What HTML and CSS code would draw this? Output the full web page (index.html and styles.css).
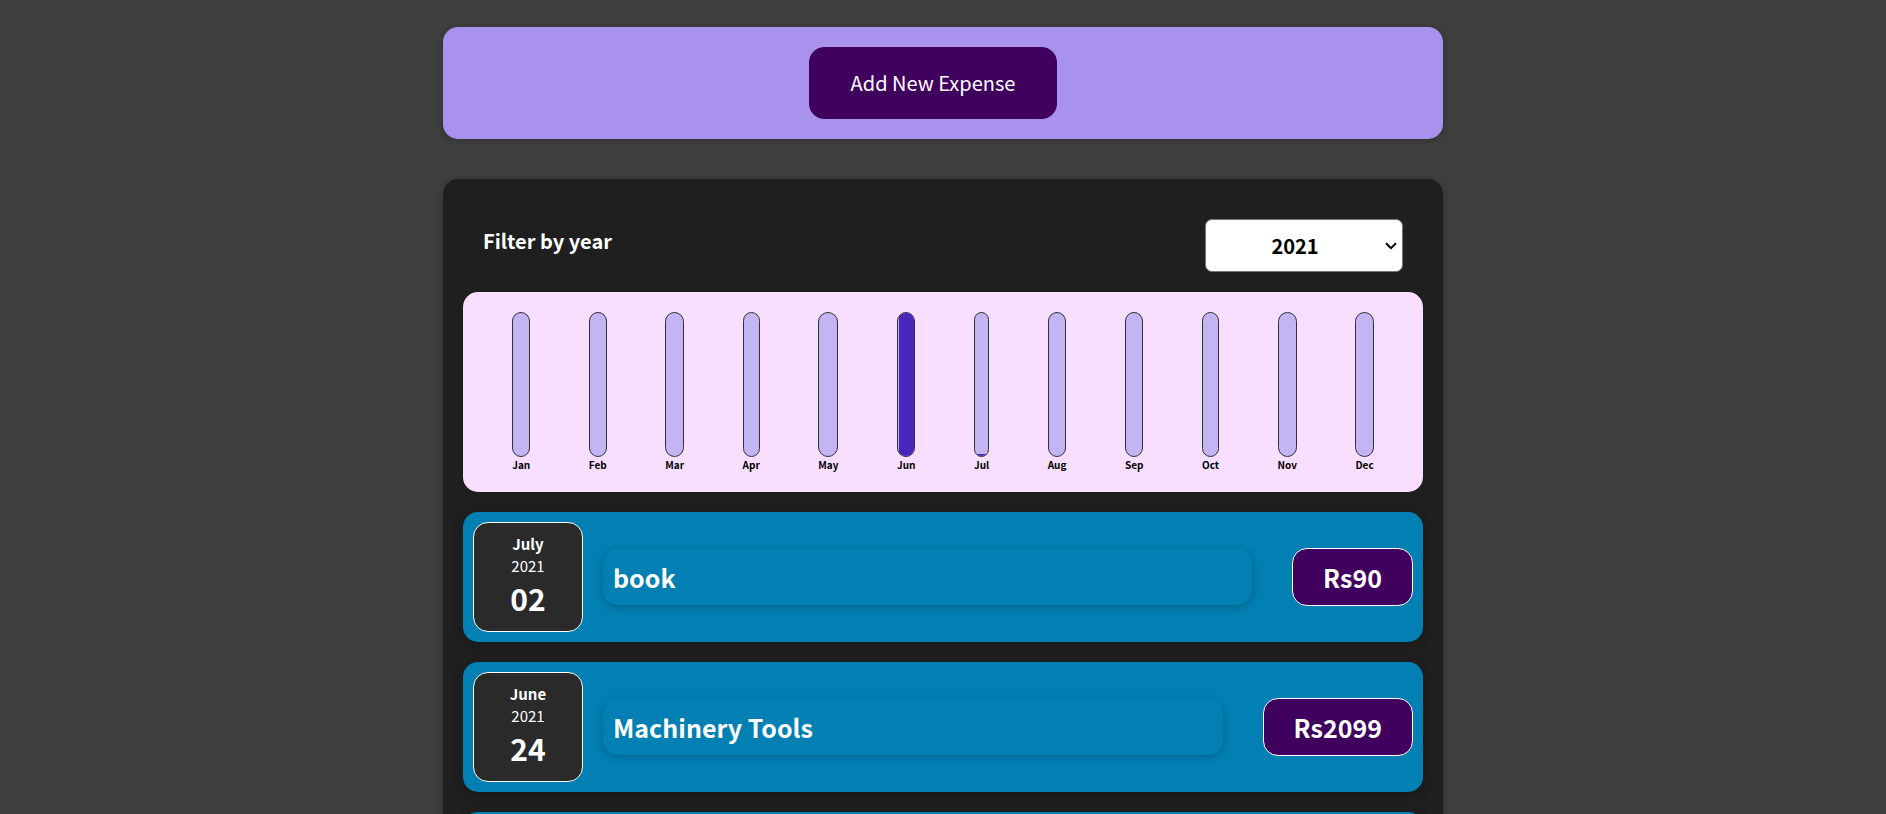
FILE: index.html
```
<!DOCTYPE html>
<html lang="en">
<head>
<meta charset="utf-8">
<title>Expenses</title>
<link rel="stylesheet" href="styles.css">
</head>
<body>
<main class="page">
  <section class="new-expense">
    <button class="add-button" type="button">Add New Expense</button>
  </section>
  <section class="expenses">
    <div class="filter">
      <label class="filter-label" for="year">Filter by year</label>
      <div class="select-wrap">
        <select class="filter-select" id="year">
          <option>2021</option>
        </select>
        <svg class="select-arrow" viewBox="0 0 12 8" width="12" height="8" aria-hidden="true">
          <path d="M1 1.2 L6 6.2 L11 1.2" fill="none" stroke="#000" stroke-width="2"/>
        </svg>
      </div>
    </div>
    <div class="chart">
      <div class="chart-bar"><div class="track"></div><span class="month">Jan</span></div>
      <div class="chart-bar"><div class="track"></div><span class="month">Feb</span></div>
      <div class="chart-bar"><div class="track"></div><span class="month">Mar</span></div>
      <div class="chart-bar"><div class="track"></div><span class="month">Apr</span></div>
      <div class="chart-bar"><div class="track"></div><span class="month">May</span></div>
      <div class="chart-bar"><div class="track"><div class="fill" style="height: 100%"></div></div><span class="month">Jun</span></div>
      <div class="chart-bar"><div class="track"><div class="fill" style="height: 1.5%"></div></div><span class="month">Jul</span></div>
      <div class="chart-bar"><div class="track"></div><span class="month">Aug</span></div>
      <div class="chart-bar"><div class="track"></div><span class="month">Sep</span></div>
      <div class="chart-bar"><div class="track"></div><span class="month">Oct</span></div>
      <div class="chart-bar"><div class="track"></div><span class="month">Nov</span></div>
      <div class="chart-bar"><div class="track"></div><span class="month">Dec</span></div>
    </div>
    <ul class="expense-list">
      <li class="expense">
        <time class="date" datetime="2021-07-02">
          <span class="date-month">July</span>
          <span class="date-year">2021</span>
          <span class="date-day">02</span>
        </time>
        <h2 class="title">book</h2>
        <div class="price">Rs90</div>
      </li>
      <li class="expense">
        <time class="date" datetime="2021-06-24">
          <span class="date-month">June</span>
          <span class="date-year">2021</span>
          <span class="date-day">24</span>
        </time>
        <h2 class="title">Machinery Tools</h2>
        <div class="price">Rs2099</div>
      </li>
      <li class="expense"></li>
    </ul>
  </section>
</main>
</body>
</html>
```
FILE: styles.css
```
* {
  box-sizing: border-box;
}

body {
  margin: 0;
  background: #3f3f3f;
  color: #fff;
  font-family: "Noto Sans CJK JP", sans-serif;
  font-size: 20px;
}

.page {
  display: flex;
  flex-direction: column;
  gap: 40px;
  width: 95%;
  max-width: 1000px;
  margin: 0 auto;
  padding: 27px 0 40px;
}

.new-expense {
  display: flex;
  justify-content: center;
  padding: 20px;
  border-radius: 15px;
  background: #a892ee;
  box-shadow: 0 1px 10px rgba(0, 0, 0, 0.25);
}

.add-button {
  margin-right: 20px;
  padding: 20px 41px;
  border: 1px solid #40005d;
  border-radius: 15px;
  background: #40005d;
  color: #fff;
  font: inherit;
  line-height: 30px;
  cursor: pointer;
}

.expenses {
  padding: 20px;
  border-radius: 15px;
  background: #1f1f1f;
  box-shadow: 0 1px 10px rgba(0, 0, 0, 0.25);
}

.filter {
  display: flex;
  justify-content: space-between;
  padding: 20px 20px 0;
}

.filter-label {
  padding-top: 7px;
  font-weight: bold;
  line-height: 30px;
}

.select-wrap {
  position: relative;
}

.filter-select {
  display: block;
  width: 198px;
  height: 53px;
  padding: 0 18px 0 0;
  border: 1px solid #767676;
  border-radius: 7px;
  appearance: none;
  background-color: #fff;
  color: #000;
  font: inherit;
  font-weight: bold;
  text-align: center;
}

.select-arrow {
  position: absolute;
  top: 23px;
  right: 6px;
  pointer-events: none;
}

.chart {
  display: flex;
  justify-content: space-around;
  height: 200px;
  margin: 20px 0;
  padding: 20px;
  border-radius: 15px;
  background: #f8dfff;
}

.chart-bar {
  display: flex;
  flex-direction: column;
  align-items: center;
}

.track {
  display: flex;
  flex: 1;
  flex-direction: column;
  justify-content: flex-end;
  width: 100%;
  overflow: hidden;
  border: 1px solid #313131;
  border-radius: 15px;
  background: #c3b4f3;
}

.fill {
  margin-left: 1px;
  background: #4826b9;
}

.month {
  color: #000;
  font-size: 10px;
  font-weight: bold;
  line-height: 15px;
}

.expense-list {
  display: flex;
  flex-direction: column;
  gap: 20px;
  margin: 0;
  padding: 0;
  list-style: none;
}

.expense {
  display: flex;
  align-items: center;
  min-height: 130px;
  padding: 10px;
  border-radius: 15px;
  background: #0280b4;
  box-shadow: 0 2px 10px rgba(0, 0, 0, 0.25);
}

.date {
  display: flex;
  flex-direction: column;
  align-items: center;
  justify-content: center;
  width: 110px;
  height: 110px;
  padding-bottom: 2px;
  border: 1px solid #fff;
  border-radius: 15px;
  background: #2a2a2a;
}

.date-month {
  font-size: 15px;
  font-weight: bold;
  line-height: 22px;
}

.date-year {
  font-size: 15px;
  line-height: 22px;
}

.date-day {
  font-size: 30px;
  font-weight: bold;
  line-height: 42px;
}

.title,
.price {
  border-radius: 15px;
  font-size: 25px;
  font-weight: bold;
  line-height: 36px;
}

.title {
  flex: 1;
  margin: 0 40px 0 20px;
  padding: 10px;
  box-shadow: 0 2px 10px rgba(0, 0, 0, 0.25);
}

.price {
  padding: 10px 30px;
  border: 1px solid #fff;
  background: #40005d;
}
```
